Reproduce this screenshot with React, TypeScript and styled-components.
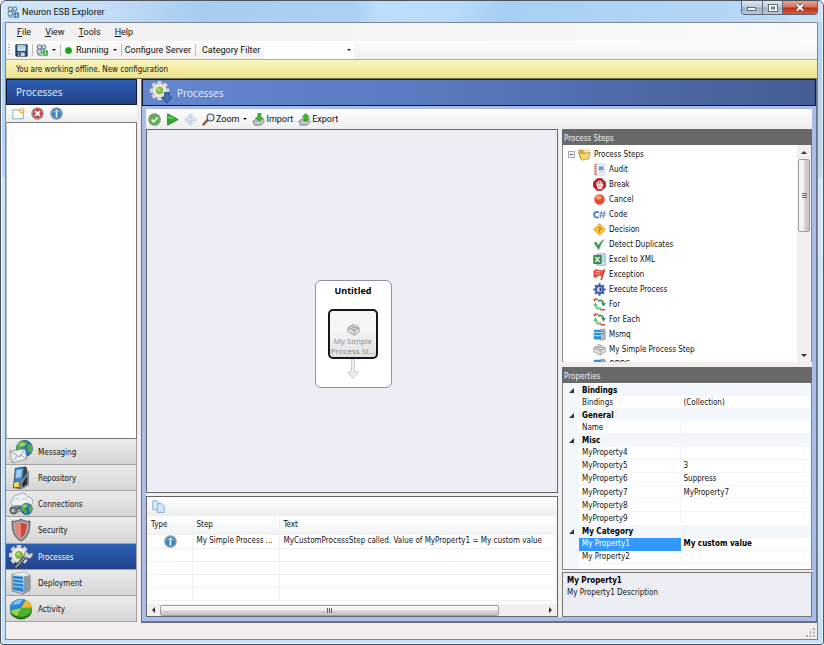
import React from "react";
import styled, { createGlobalStyle, css } from "styled-components";

const UI = `"DejaVu Sans Condensed", "DejaVu Sans", Verdana, sans-serif`;
const MENU = `Roboto, "Open Sans", sans-serif`;
const HEADING = `"Open Sans", "Noto Sans", sans-serif`;

const Global = createGlobalStyle`
  * { box-sizing: border-box; }
  html, body, #root { height: 100%; }
  body { margin: 0; background: #fff; font: 8px/12px ${UI}; color: #111; }
  button, select { font: inherit; color: inherit; background: none; border: 0; padding: 0; margin: 0; }
  ul { list-style: none; margin: 0; padding: 0; }
  svg { display: block; flex: none; }
`;

/* ---------- window frame ---------- */

const Window = styled.div`
  height: 100vh;
  display: flex;
  flex-direction: column;
  border: 1px solid #50565e;
  border-radius: 6px 6px 3px 3px;
  padding: 0 5px 4px 4px;
  background: linear-gradient(180deg, #c3dcf5 0, #b5d5f4 60px, #b9d9f7 175px, #cfe6fb 178px, #c6e2fb 100%);
  box-shadow: inset 0 0 0 1px #e6f3fe;
`;
const TitleBar = styled.header`
  height: 21px;
  flex: none;
  display: flex;
  align-items: flex-start;
  margin: 0 -4px 0 -3px;
  padding-left: 5px;
  border-radius: 5px 5px 0 0;
  background: linear-gradient(100deg, #d5e8f8 0%, #c4ddf6 13%, #a6cdf0 24%, #abd0f2 43%, #bcdffd 46%, #b9dcfb 55%, #a5cff3 61%, #acd3f5 72%, #b4d6f6 88%, #cbe3f8 100%);
`;
const Title = styled.h1`
  flex: 1;
  margin: 0;
  padding: 4px 0 0 3px;
  font: 9px/14px ${MENU};
`;
const TitleIcon = styled.div`padding-top: 5px;`;
const Captions = styled.div`
  display: flex;
  height: 14px;
  margin-right: 4px;
  border: 1px solid #5d6876;
  border-top: 0;
  border-radius: 0 0 4px 4px;
  overflow: hidden;
`;
const Caption = styled.button<{ $close?: boolean }>`
  width: ${p => (p.$close ? 35 : 20)}px;
  display: grid;
  place-items: center;
  background: ${p => p.$close
    ? "linear-gradient(#e2a594 0, #d3705a 48%, #bd2f17 52%, #d5593e 100%)"
    : "linear-gradient(#dbe6f0 0, #bccbdb 48%, #9db0c4 52%, #b9cbdc 100%)"};
  & + & { border-left: 1px solid #66707c; }
`;
const Client = styled.div`
  flex: 1;
  min-height: 0;
  display: flex;
  flex-direction: column;
  border: 1px solid #7e8792;
  background: #f1eeed;
`;

/* ---------- bars ---------- */

const MenuBar = styled.nav`
  height: 18px;
  flex: none;
  display: flex;
  align-items: center;
  gap: 14px;
  padding-left: 11px;
  background: linear-gradient(90deg, #f0f0f0, #fafafa);
  font: 9px/14px ${MENU};
  u { text-underline-offset: 1px; }
`;
const ToolBar = styled.div`
  height: 18px;
  flex: none;
  display: flex;
  align-items: center;
  padding-left: 2px;
  background: linear-gradient(#fdfdfd, #efefef);
  font: 9px/14px ${MENU};
`;
const Grip = styled.span`
  width: 2px;
  height: 12px;
  margin-right: 5px;
  background: repeating-linear-gradient(#b5b5b5 0 1px, transparent 1px 3px);
`;
const Divider = styled.span`
  width: 1px;
  height: 12px;
  margin: 0 3px 0 4px;
  background: #bdbdbd;
`;
const ToolButton = styled.button`
  display: flex;
  align-items: center;
  gap: 3px;
  white-space: nowrap;
`;
const Caret = styled.span`
  border: 2px solid transparent;
  border-top-color: #111;
  border-bottom: 0;
  margin-left: 1px;
`;
const ComboBox = styled.div`
  width: 90px;
  height: 18px;
  margin-left: 4px;
  display: grid;
  align-items: center;
  background: #fff;
  select { grid-area: 1 / 1; width: 100%; height: 100%; appearance: none; }
  ${Caret} { grid-area: 1 / 1; justify-self: end; margin-right: 3px; pointer-events: none; }
`;
const FilterLabel = styled.label`
  padding-left: 3px;
  white-space: nowrap;
`;
const Notice = styled.div`
  height: 20px;
  flex: none;
  padding: 0 10px;
  border-top: 1px solid #b5b184;
  border-bottom: 1px solid #77744d;
  background: linear-gradient(#f9f6bf, #ede38d);
  font: 8px/19px ${UI};
`;
const StatusBar = styled.footer`
  height: 16px;
  flex: none;
  display: flex;
  align-items: flex-end;
  justify-content: flex-end;
  padding: 2px;
  background: #f1eeed;
`;

/* ---------- body ---------- */

const Body = styled.div`
  flex: 1;
  min-height: 0;
  display: grid;
  grid-template-columns: 131px minmax(0, 1fr);
  grid-template-rows: minmax(0, 1fr);
  gap: 4px;
`;
const Heading = styled.h2<{ $wide?: boolean }>`
  height: ${p => (p.$wide ? 27 : 26)}px;
  flex: none;
  display: flex;
  align-items: center;
  gap: 4px;
  margin: 0;
  padding-left: ${p => (p.$wide ? 7 : 9)}px;
  border: 1px solid #10182e;
  background: ${p => p.$wide
    ? "linear-gradient(90deg, #6486d0, #5a7cc0 40%, #445d95)"
    : "linear-gradient(#2c60b5, #24428a)"};
  color: #eef3ff;
  font: 10px/14px ${HEADING};
`;
const Sidebar = styled.aside`
  display: flex;
  flex-direction: column;
  min-height: 0;
  padding-bottom: 1px;
`;
const SideTools = styled.div`
  height: 17px;
  flex: none;
  display: flex;
  align-items: center;
  gap: 6px;
  padding-left: 6px;
  background: linear-gradient(#fff, #eee);
`;
const SideList = styled.div`
  flex: 1;
  border: 1px solid #777;
  border-left-color: #bbb;
  background: #fff;
`;
const SideNav = styled.nav`
  height: 183px;
  flex: none;
  display: grid;
  grid-template-rows: repeat(7, minmax(0, 1fr));
`;
const NavButton = styled.button<{ $active?: boolean }>`
  display: flex;
  align-items: center;
  gap: 5px;
  padding: 1px 0 0 3px;
  border-bottom: 1px solid #a2a2a2;
  border-right: 1px solid #a2a2a2;
  background: linear-gradient(#ebebeb, #d5d5d5);
  text-align: left;
  ${p => p.$active && css`
    background: linear-gradient(#2c60b5, #24428a);
    color: #fff;
  `}
`;
const NavLabel = styled.span`padding-top: 2px;`;
const Main = styled.main`
  display: flex;
  flex-direction: column;
  min-width: 0;
  min-height: 0;
  border: solid #6d7178;
  border-width: 0 1px 2px;
`;
const Work = styled.div`
  flex: 1;
  min-height: 0;
  display: flex;
  flex-direction: column;
  padding: 3px 4px 4px;
  background: #a9bde8;
`;
const WorkTools = styled(ToolBar)`
  height: 20px;
  gap: 5px;
  ${ToolButton} { gap: 1px; }
  ${Caret} { margin-left: 3px; }
`;
const Panes = styled.div`
  flex: 1;
  min-height: 0;
  display: grid;
  grid-template-columns: minmax(0, 1fr) 250px;
  grid-template-rows: minmax(0, 1fr);
  gap: 4px;
  background: #f1eeed;
`;
const Column = styled.div`
  display: flex;
  flex-direction: column;
  min-height: 0;
  min-width: 0;
`;

/* ---------- designer ---------- */

const Canvas = styled.section`
  flex: 1;
  min-height: 0;
  display: grid;
  place-items: center;
  padding: 46px 0 0 2px;
  border: 1px solid #666;
  background: #edeef5;
`;
const ProcessCard = styled.div`
  width: 77px;
  height: 108px;
  display: flex;
  flex-direction: column;
  align-items: center;
  border: 1px solid #8e90ad;
  border-radius: 6px;
  background: #fff;
  h3 { margin: 3px 0 12px; font: bold 9px/13px ${HEADING}; color: #000; }
`;
const Step = styled.button`
  width: 50px;
  height: 50px;
  display: flex;
  flex-direction: column;
  align-items: center;
  justify-content: flex-end;
  padding-bottom: 1px;
  border: 2px solid #15171a;
  border-radius: 5px;
  background: linear-gradient(#f5f5f5 0 40%, #e0e0e0);
  color: #888;
  font: 8px/10px ${HEADING};
  white-space: nowrap;
`;

/* ---------- trace list ---------- */

const Trace = styled.section`
  height: 121px;
  flex: none;
  display: flex;
  flex-direction: column;
  margin-top: 3px;
  border: 1px solid #666;
  background: #fff;
`;
const TraceTools = styled.div`
  height: 19px;
  flex: none;
  display: flex;
  align-items: center;
  padding-left: 5px;
  background: linear-gradient(#fff, #eee);
`;
const TraceTable = styled.table`
  width: 100%;
  border-collapse: collapse;
  table-layout: fixed;
  th, td {
    height: 13px;
    padding: 0 4px;
    border-right: 1px solid #f0f0f0;
    border-bottom: 1px solid #f0f0f0;
    font-weight: normal;
    text-align: left;
    white-space: nowrap;
    overflow: hidden;
    text-overflow: ellipsis;
  }
  th { height: 18px; background: linear-gradient(#fff, #f2f3f5); }
  td svg { margin-left: 13px; }
`;
const TraceBody = styled.div`
  flex: 1;
  min-height: 0;
  overflow: hidden;
`;

/* ---------- scroll bars ---------- */

const HScroll = styled.div`
  height: 12px;
  flex: none;
  display: grid;
  grid-template-columns: 13px 339fr 45fr 13px;
  align-items: center;
  justify-items: center;
  background: #f0f0f0;
`;
const VScroll = styled.div`
  width: 14px;
  flex: none;
  display: grid;
  grid-template-rows: 14px 73fr 116fr 14px;
  align-items: center;
  justify-items: center;
  background: #f0f0f0;
`;
const Thumb = styled.div<{ $vertical?: boolean }>`
  width: ${p => (p.$vertical ? "12px" : "100%")};
  height: ${p => (p.$vertical ? "100%" : "11px")};
  display: grid;
  place-items: center;
  border: 1px solid #a0a0a0;
  border-radius: 2px;
  background: linear-gradient(${p => (p.$vertical ? "90deg" : "180deg")}, #f4f4f4 0 40%, #d2d2d2 60%, #c4c4c4);
  &::after {
    content: "";
    width: ${p => (p.$vertical ? 5 : 6)}px;
    height: ${p => (p.$vertical ? 6 : 5)}px;
    background: repeating-linear-gradient(${p => (p.$vertical ? "180deg" : "90deg")}, #666 0 1px, transparent 1px 2px);
  }
`;
const Arrow = styled.span<{ $to: "up" | "down" | "left" | "right" }>`
  border: 3px solid transparent;
  ${p => p.$to === "up" && css`border-bottom-color: #333; border-top: 0;`}
  ${p => p.$to === "down" && css`border-top-color: #333; border-bottom: 0;`}
  ${p => p.$to === "left" && css`border-right-color: #333; border-left: 0;`}
  ${p => p.$to === "right" && css`border-left-color: #333; border-right: 0;`}
`;

/* ---------- right hand panels ---------- */

const PanelTitle = styled.h3<{ $spaced?: boolean }>`
  height: 16px;
  flex: none;
  margin: ${p => (p.$spaced ? "5px" : "0")} 0 0;
  padding-left: 2px;
  background: #696969;
  color: #f2f2f2;
  font: 8px/19px ${UI};
`;
const TreePanel = styled.section`
  flex: 1;
  min-height: 0;
  display: flex;
  overflow: hidden;
  border: solid #888;
  border-width: 0 1px;
  background: #fff;
`;
const Tree = styled.ul`
  flex: 1;
  height: 100%;
  padding: 2px 0 0 5px;
  overflow: hidden;
`;
const TreeRow = styled.li<{ $root?: boolean }>`
  height: 15px;
  display: flex;
  align-items: center;
  gap: 3px;
  padding-left: ${p => (p.$root ? 0 : 25)}px;
  white-space: nowrap;
`;
const Expander = styled.button`
  width: 7px;
  height: 7px;
  display: grid;
  place-items: center;
  border: 1px solid #a5abb5;
  background: #f6f6f6;
  &::after { content: ""; width: 3px; height: 1px; background: #4a5a94; }
`;
const Grid = styled.section`
  height: 187px;
  flex: none;
  padding-top: 1px;
  border: 1px solid #888;
  border-top: 0;
  background: linear-gradient(90deg, #f3f6fb 16px, #fff 16px);
`;
const GridTable = styled.table`
  width: 100%;
  height: 180px;
  border-collapse: collapse;
  table-layout: fixed;
  line-height: 11px;
  td, th { padding: 0 3px; text-align: left; font-weight: normal; white-space: nowrap; }
`;
const Category = styled.tr`
  background: #f3f6fb;
  && th { font: bold 8px/11px ${UI}; color: #000; }
`;
const Toggle = styled.td`
  background: #f3f6fb;
  svg { margin-left: 3px; }
`;
const Property = styled.tr<{ $selected?: boolean }>`
  && th, && td + th + td { border-bottom: 1px solid #f3f5f9; border-right: 1px solid #f3f5f9; }
  ${p => p.$selected && css`
    && th { background: #3399ff; color: #fff; border-color: #3399ff; }
    && th + td { font-weight: bold; color: #000; }
  `}
`;
const Description = styled.section`
  height: 45px;
  flex: none;
  margin-top: 2px;
  padding: 2px 4px;
  border: 1px solid #777;
  background: #edeef5;
  h4 { margin: 0; font: bold 8px/12px ${UI}; color: #000; }
  p { margin: 0; }
`;

/* ---------- icons ---------- */

type IconProps = { size?: number; box?: number; children?: React.ReactNode };
const Icon = ({ size = 13, box = 16, children }: IconProps) => (
  <svg width={size} height={size} viewBox={`0 0 ${box} ${box}`} aria-hidden="true">{children}</svg>
);

const Cubes = ({ badge }: { badge: string }) => (
  <Icon size={12}>
    <g fill="#cfdce4" stroke="#4f6b80" strokeWidth="1.200">
      <circle cx="4.500" cy="4" r="3" /><circle cx="10.500" cy="4" r="2.800" />
      <circle cx="4.500" cy="10" r="3.200" /><circle cx="9.500" cy="9" r="2.600" />
      <path d="M2 14l4 1.500 3-1.500" fill="none" />
    </g>
    <rect x="9" y="8" width="7" height="8" rx="1.500" fill={badge} stroke="#e6f0f6" strokeWidth=".6" />
    <path d="M12.500 9.500v4.500M11 12.500l1.500 1.500 1.500-1.500" stroke="#fff" fill="none" />
  </Icon>
);
const Save = () => (
  <Icon>
    <path d="M1 1h14v14H2l-1-1z" fill="#245078" stroke="#152f49" />
    <rect x="3" y="1.500" width="10" height="7" fill="#d6e6f2" />
    <path d="M3 3h10M3 5h10" stroke="#9fbcd2" />
    <rect x="4" y="10.500" width="8" height="4.500" fill="#cdd4da" />
    <rect x="5" y="11" width="2" height="3.500" fill="#1d3d5b" />
  </Icon>
);
const GreenDot = () => <Icon size={9}><circle cx="8" cy="8" r="6" fill="#18a51e" stroke="#5cc35c" /></Icon>;
const NewItem = () => (
  <Icon>
    <path d="M1 3.500h13v11H1z" fill="#fbfdff" stroke="#6aa0a8" />
    <path d="M12 0l1 2.500 2.500-1-1 2.500L16 5.500l-2.500.8.5 2.200-2.500-1.300L9 8.500l.5-2.500L7.500 4l3-.7z" fill="#f5b53c" />
    <circle cx="12" cy="4.500" r="1.800" fill="#ffe596" />
  </Icon>
);
const Delete = () => (
  <Icon>
    <circle cx="8" cy="8" r="7" fill="#d2464a" stroke="#a39c9e" strokeWidth="1.600" />
    <path d="M5 5l6 6M11 5l-6 6" stroke="#fff" strokeWidth="2.200" />
  </Icon>
);
const Info = () => (
  <Icon>
    <circle cx="8" cy="8" r="7" fill="#3c86c4" stroke="#8fa4b6" strokeWidth="1.600" />
    <path d="M3 6.500a5.500 4.500 0 0 1 10 0z" fill="#79b4e2" />
    <path d="M8 3.500v2M8 6.500v6" stroke="#fff" strokeWidth="2" fill="none" />
  </Icon>
);
const Valid = () => (
  <Icon>
    <circle cx="8" cy="8" r="7" fill="#57b447" stroke="#8a9a88" strokeWidth="1.600" />
    <path d="M4.500 8.200l2.500 2.600 4.800-5.200" stroke="#fff" strokeWidth="2.200" fill="none" />
  </Icon>
);
const Play = () => <Icon><path d="M2 1l13 7-13 7z" fill="#2fa82c" stroke="#1c8420" /><path d="M3 3.500L11 7.500H3z" fill="#6dd062" /></Icon>;
const Move = () => (
  <Icon>
    <path d="M8 .8l2.600 3H9v3.200h3.200V5.400l3 2.600-3 2.600V9H9v3.200h1.600l-2.600 3-2.600-3H7V9H3.800v1.600L.8 8l3-2.600V7H7V3.800H5.400z" fill="#e8eff8" stroke="#a1b3cd" strokeWidth=".8" />
  </Icon>
);
const Magnifier = () => (
  <Icon>
    <path d="M1.800 14.200L7 8.500" stroke="#8a5c2e" strokeWidth="3" strokeLinecap="round" />
    <circle cx="10.500" cy="5.500" r="4.300" fill="#dcecf8" stroke="#4c5560" strokeWidth="1.400" />
  </Icon>
);
const Disk = ({ up }: { up?: boolean }) => (
  <Icon>
    <path d="M1 10l4-3h9l1 4-4 4H3z" fill="#a9b7bf" stroke="#67777f" strokeWidth=".8" />
    <path d="M3 12l8 .2 3-3" stroke="#e9f0f2" fill="none" />
    {up
      ? <path d="M9.500.5L14 5h-2.500v5h-4V5H5z" fill="#3fb830" stroke="#258019" strokeWidth=".7" />
      : <path d="M9 10L4.500 5.800H7V1l4-1v5.800h2.500z" fill="#3fb830" stroke="#258019" strokeWidth=".7" />}
  </Icon>
);
const teeth = (n: number, cx: number, cy: number, r: number, w: number, h: number, fill: string) =>
  Array.from({ length: n }, (_, i) => (
    <rect key={i} x={cx - w / 2} y={cy - r - h / 2} width={w} height={h} rx={w / 6} fill={fill} transform={`rotate(${(360 / n) * i} ${cx} ${cy})`} />
  ));
const GearDown = () => (
  <Icon size={23} box={24}>
    {teeth(8, 10, 10, 8, 4.500, 4, "#dcdcd4")}
    <circle cx="10" cy="10" r="7.500" fill="#e9e9e2" stroke="#b9bab0" strokeWidth=".6" />
    <circle cx="10" cy="10" r="4" fill="#94a88c" /><circle cx="10" cy="10" r="3.200" fill="#7fc92a" /><circle cx="9" cy="9" r="1.200" fill="#c6ee8b" />
    <path d="M15 12h5v5h3l-5.500 6-5.500-6h3z" fill="#3e6fb1" stroke="#24446f" strokeWidth=".8" />
  </Icon>
);
const Globe = ({ x, y, r }: { x: number; y: number; r: number }) => (
  <g transform={`translate(${x} ${y}) scale(${r / 10})`}>
    <circle r="10" fill="#2572c4" stroke="#1b4a87" />
    <path d="M-3-9.500C1-8 5-8 3-5S-3-3-3 0s4 1 4 4-1 5-3 4-3-5-6-6-2-7 0-9zM5-5c3-1 5 2 5 5s-2 6-4 5-1-3-2-5 0-4 1-5z" fill="#54b23d" />
    <ellipse cx="-3" cy="-5" rx="4" ry="2.500" fill="#fff" opacity=".35" />
  </g>
);
const Messaging = () => (
  <Icon size={24} box={24}>
    <Globe x={15.500} y={8.500} r={8} />
    <path d="M1 11l15-2 2 10-15 4z" fill="#eceff0" stroke="#8b9498" strokeWidth=".8" />
    <path d="M1 11l9.500 6L16 9M3 23l5-7.500M18 19l-6.500-4.200" fill="none" stroke="#8b9498" strokeWidth=".8" />
  </Icon>
);
const Repository = () => (
  <Icon size={24} box={24}>
    <path d="M6 2l10-1.500 2 1.500 1 17-7 4-8-1z" fill="#3b4148" />
    <path d="M6.500 2.500L15 1.500 13 18l-8 2z" fill="#3f86c6" />
    <path d="M7.500 4l5.500-.8-1 8-5.500 1z" fill="#9fcdf0" />
    <path d="M11 17L20 4v15l-7 4-3-1z" fill="#7d868e" />
    <path d="M13 18l5-8v8l-4 3z" fill="#25292e" />
    <path d="M5 17l5-1v5l-5 .5z" fill="#f3da4a" />
  </Icon>
);
const Connections = () => (
  <Icon size={24} box={24}>
    <path d="M5 14a4 4 0 0 1-1-7.500A4.500 4.500 0 0 1 9 3a5.500 5.500 0 0 1 9.500 2A4.500 4.500 0 0 1 20 14z" fill="#eef1f4" stroke="#8d989f" strokeWidth=".8" />
    <path d="M4 9a4 3 0 0 1 6-2M12 8a4 4 0 0 1 7 1" stroke="#c2cbd2" fill="none" />
    <circle cx="4.500" cy="18.500" r="3" fill="none" stroke="#535c63" strokeWidth="1.800" />
    <circle cx="8" cy="17" r="3" fill="none" stroke="#7c868d" strokeWidth="1.500" />
    <path d="M8 17l4-2.500" stroke="#535c63" strokeWidth="2.200" />
    <Globe x={17.500} y={17} r={5.800} />
  </Icon>
);
const Security = () => (
  <Icon size={24} box={24}>
    <path d="M12 1c3 2 6 2.500 9 2 0 9-1 16-9 20C4 19 3 12 3 3c3 .5 6 0 9-2z" fill="#878c90" stroke="#4e5357" strokeWidth=".8" />
    <path d="M12 3.500c2 1.400 4.500 1.800 6.500 1.600C18.500 12 17.500 17.500 12 20.700 6.500 17.500 5.500 12 5.500 5.100 7.500 5.300 10 4.900 12 3.500z" fill="#c64a42" stroke="#dfe2e3" strokeWidth=".8" />
    <path d="M12 3.500v17.200C6.500 17.500 5.500 12 5.500 5.100 7.500 5.300 10 4.900 12 3.500z" fill="#e2857b" />
  </Icon>
);
const Processes = () => (
  <Icon size={24} box={24}>
    {teeth(8, 10, 10, 8, 4.500, 4, "#dcdcd4")}
    <circle cx="10" cy="10" r="7.500" fill="#ecece5" stroke="#b9bab0" strokeWidth=".6" />
    <circle cx="10" cy="10" r="3.600" fill="#7fc92a" stroke="#8a9a80" /><circle cx="9" cy="9" r="1.200" fill="#c6ee8b" />
    <path d="M7 22L17 11" stroke="#383d42" strokeWidth="3.600" strokeLinecap="round" />
    <path d="M7 22L17 11" stroke="#a5adb3" strokeWidth="1.400" strokeLinecap="round" />
    <path d="M16 12.500a4 4 0 0 1 2.500-6.500l.5 3 3-.5 1-1.500a4 4 0 0 1-5 6z" fill="#d0d5d8" stroke="#555c62" strokeWidth=".7" />
  </Icon>
);
const Deployment = () => (
  <Icon size={24} box={24}>
    <path d="M3 3l12-2 6 3v15l-7 4-11-3z" fill="#c9d0d5" stroke="#6a747b" strokeWidth=".8" />
    <path d="M15 5l6-1v15l-7 4z" fill="#8e989f" />
    <path d="M4 5l10 .5V21L4 19z" fill="#2e84c8" />
    <path d="M4 8l10 1M4 11.500l10 1.200M4 15l10 1.500" stroke="#a9dbf8" strokeWidth="1.200" />
    <path d="M3 3l12-2 6 3-6 1.500z" fill="#e6eaec" />
  </Icon>
);
const Activity = () => (
  <Icon size={24} box={24}>
    <ellipse cx="12" cy="13.500" rx="11" ry="9" fill="#2b6e1c" />
    <ellipse cx="12" cy="11" rx="11" ry="9" fill="#4eae2e" />
    <path d="M12 11L1.500 14A11 9 0 0 1 17 3z" fill="#2e88d0" />
    <path d="M3 8a11 9 0 0 1 11-5.800L11 7z" fill="#7bc2ee" />
    <path d="M12 11l5-8a11 9 0 0 1 6 7.500z" fill="#f0b72c" />
    <path d="M12 11L1.500 14a11 9 0 0 0 6 5z" fill="#a0d348" />
  </Icon>
);
const Folder = () => (
  <Icon>
    <path d="M.8 5l1-2.500h4L7 4h6v9H3z" fill="#e3b03a" stroke="#a97b1e" strokeWidth=".8" />
    <path d="M7 3.500l4-1.500 2.500 1v3h-6z" fill="#fff3c4" stroke="#c09a3c" strokeWidth=".6" />
    <path d="M5 7l10-1.500-1.500 8L5 15 1 6z" fill="#f7d96f" stroke="#b4882b" strokeWidth=".8" />
  </Icon>
);
const Audit = () => (
  <Icon>
    <path d="M4 1h11v14H4z" fill="#f3f6fa" stroke="#c3ccd6" strokeWidth=".8" />
    <path d="M1.500 1h3v14h-3z" fill="#c77f5c" />
    <path d="M1 3h4M1 6h4M1 9h4M1 12h4" stroke="#efe0d5" />
    <path d="M7 4h6v5H7z" fill="#6f9fdd" /><path d="M7 11h6" stroke="#a8b8ce" />
  </Icon>
);
const Break = () => (
  <Icon>
    <path d="M5 .8h6L15.200 5v6L11 15.200H5L.8 11V5z" fill="#c41e28" stroke="#8f1118" />
    <path d="M5 8V4.500M7 7.500V3M9 7.500V3M11 8V4.500M5 8l1.500 5h4L12 8z" stroke="#fbdcdc" strokeWidth="1.400" fill="#f6bcbc" />
  </Icon>
);
const Cancel = () => <Icon><circle cx="8" cy="8" r="6.500" fill="#ea4a34" stroke="#f7a497" /><ellipse cx="7" cy="5.500" rx="3.500" ry="2.500" fill="#ff9b80" /></Icon>;
const Code = () => (
  <Icon>
    <path d="M7 5.500A3.300 3.600 0 1 0 7 11" fill="none" stroke="#4179cb" strokeWidth="2.200" />
    <path d="M10.500 3.500L9 12.500M14 3.500l-1.500 9M8 6.500h8M7.500 9.500h8" stroke="#5b8fda" strokeWidth="1.300" />
  </Icon>
);
const Decision = () => (
  <Icon>
    <path d="M8 .8L15.200 8 8 15.200.8 8z" fill="#f8c53a" stroke="#d89a22" />
    <path d="M6.500 6.500q1.500-2 3 0Q9.500 8 8 8.500v1M8 10.500v1" fill="none" stroke="#6d5312" strokeWidth="1.200" />
  </Icon>
);
const Check = () => <Icon><path d="M1.500 6L4 5l2.500 4.500Q9 4 13.500 2q-4.500 5-6.500 12.500z" fill="#36a04a" stroke="#23853a" strokeWidth=".6" /></Icon>;
const Excel = () => (
  <Icon>
    <path d="M5 1h10v14H5z" fill="#dbe9f6" stroke="#7f9cba" />
    <path d="M10 4h4M10 7h4M10 10h4" stroke="#8db0d3" />
    <path d="M1 3h9v10H1z" fill="#3a9a4b" stroke="#26743a" />
    <path d="M3 5l5 6M8 5l-5 6" stroke="#fff" strokeWidth="1.600" />
  </Icon>
);
const Exception = () => (
  <Icon>
    <path d="M14 2L10 15" stroke="#a8632f" strokeWidth="2" />
    <path d="M1 3.500q3-2.500 6-1T14.500 2L11.500 10Q8 8 5.500 10.500T1 11z" fill="#e8513f" stroke="#c9372a" strokeWidth=".6" />
    <path d="M3 5q3-2 6 0M3 8q2-1.500 5-1" stroke="#ffc5b8" fill="none" />
  </Icon>
);
const BlueGear = () => (
  <Icon>
    {teeth(8, 8, 8, 6, 2.600, 3.200, "#3d5bb0")}
    <circle cx="8" cy="8" r="4.400" fill="#e4ebfa" stroke="#3d5bb0" strokeWidth="2.600" />
    <path d="M8 5.500a2.500 2.500 0 0 1 0 5z" fill="#24367c" />
  </Icon>
);
const Loop = () => (
  <Icon>
    <path d="M1 1.500h5M9 14.500h6M1 3.500h2" stroke="#e04848" strokeWidth="1.800" />
    <path d="M6 3.500q6-2 7 4" fill="none" stroke="#2f9450" strokeWidth="2.200" />
    <path d="M3 8.500q1 6 7 4" fill="none" stroke="#56c46e" strokeWidth="2.200" />
    <path d="M10 6.500h6l-3 4z" fill="#2f9450" /><path d="M0 9.500h6l-3-4z" fill="#56c46e" />
  </Icon>
);
const Queue = () => (
  <Icon>
    <path d="M9 2l4-1 2 1v12l-4 1H9z" fill="#b4bcc2" stroke="#7d878e" strokeWidth=".7" />
    <path d="M11 4h3M11 6.500h3" stroke="#6b747b" />
    <rect x="1" y="2" width="9" height="12" rx="1.500" fill="#2e8fdc" />
    <path d="M1 5.500h9M1 9.500h9" stroke="#c9e8fd" strokeWidth="1.200" />
  </Icon>
);
const Brick = () => (
  <Icon>
    <g stroke="#8d8d8d" strokeWidth=".8">
      <path d="M1 6l6-3.500L15 6v5l-6 4-8-4z" fill="#dcdcdc" />
      <path d="M1 6l8 3.500L15 6M9 9.500V15" fill="none" />
      <ellipse cx="5" cy="5.200" rx="1.800" ry="1.300" fill="#f4f4f4" /><ellipse cx="9.200" cy="6.800" rx="1.800" ry="1.300" fill="#f4f4f4" />
      <ellipse cx="7.500" cy="3" rx="1.800" ry="1.300" fill="#f4f4f4" /><ellipse cx="11.500" cy="4.600" rx="1.800" ry="1.300" fill="#f4f4f4" />
    </g>
  </Icon>
);
const CopyPages = () => (
  <Icon>
    <path d="M1 1h5l3 3v8H1z" fill="#e1eefb" stroke="#6fa0d8" />
    <path d="M6.500 4.500h5l3.500 3v8H6.500z" fill="#d2e6fa" stroke="#6fa0d8" />
  </Icon>
);
const Down = () => (
  <svg width="12" height="20" viewBox="0 0 12 20" aria-hidden="true">
    <path d="M4.500 0h3v13h4L6 19.500.5 13h4z" fill="#ededed" stroke="#cfcfcf" />
  </svg>
);
const OpenMark = () => <svg width="5" height="5" viewBox="0 0 5 5" aria-hidden="true"><path d="M5 0v5H0z" fill="#333" /></svg>;
const Minimize = () => <svg width="10" height="8" viewBox="0 0 10 8" aria-hidden="true"><rect x=".5" y="3.500" width="8" height="3" fill="#fff" stroke="#626d7a" /></svg>;
const Maximize = () => (
  <svg width="10" height="8" viewBox="0 0 10 8" aria-hidden="true">
    <rect x=".5" y=".5" width="9" height="7" fill="#fff" stroke="#626d7a" /><rect x="3.500" y="3" width="3" height="2" fill="#b4c2d1" stroke="#626d7a" />
  </svg>
);
const Close = () => (
  <svg width="10" height="9" viewBox="0 0 10 9" aria-hidden="true">
    <path d="M2 1.500l6 6M8 1.500l-6 6" stroke="#6c3a3a" strokeWidth="3.600" /><path d="M2 1.500l6 6M8 1.500l-6 6" stroke="#fff" strokeWidth="2" />
  </svg>
);
const SizeGrip = () => (
  <svg width="9" height="9" viewBox="0 0 9 9" fill="#b3b0ae" aria-hidden="true">
    <path d="M7 0h2v2H7zM7 3.500h2v2H7zM7 7h2v2H7zM3.500 3.500h2v2h-2zM3.500 7h2v2h-2zM0 7h2v2H0z" />
  </svg>
);

/* ---------- data ---------- */

const navItems = [
  { label: "Messaging", icon: <Messaging /> },
  { label: "Repository", icon: <Repository /> },
  { label: "Connections", icon: <Connections /> },
  { label: "Security", icon: <Security /> },
  { label: "Processes", icon: <Processes />, active: true },
  { label: "Deployment", icon: <Deployment /> },
  { label: "Activity", icon: <Activity /> },
];
const steps: [string, React.ReactNode][] = [
  ["Audit", <Audit />], ["Break", <Break />], ["Cancel", <Cancel />], ["Code", <Code />],
  ["Decision", <Decision />], ["Detect Duplicates", <Check />], ["Excel to XML", <Excel />],
  ["Exception", <Exception />], ["Execute Process", <BlueGear />], ["For", <Loop />],
  ["For Each", <Loop />], ["Msmq", <Queue />], ["My Simple Process Step", <Brick />], ["ODBC", <Queue />],
];
const categories: { name: string; rows: [string, string][] }[] = [
  { name: "Bindings", rows: [["Bindings", "(Collection)"]] },
  { name: "General", rows: [["Name", ""]] },
  { name: "Misc", rows: [["MyProperty4", ""], ["MyProperty5", "3"], ["MyProperty6", "Suppress"], ["MyProperty7", "MyProperty7"], ["MyProperty8", ""], ["MyProperty9", ""]] },
  { name: "My Category", rows: [["My Property1", "My custom value"], ["My Property2", ""]] },
];
const menus = ["File", "View", "Tools", "Help"];

export default function App() {
  return (
    <>
      <Global />
      <Window>
        <TitleBar>
          <TitleIcon><Cubes badge="#2f6fb5" /></TitleIcon>
          <Title>Neuron ESB Explorer</Title>
          <Captions>
            <Caption aria-label="Minimize"><Minimize /></Caption>
            <Caption aria-label="Maximize"><Maximize /></Caption>
            <Caption $close aria-label="Close"><Close /></Caption>
          </Captions>
        </TitleBar>
        <Client>
          <MenuBar>
            {menus.map(m => <button key={m}><u>{m[0]}</u>{m.slice(1)}</button>)}
          </MenuBar>
          <ToolBar>
            <Grip />
            <ToolButton aria-label="Save"><Save /></ToolButton>
            <Divider />
            <ToolButton aria-label="Services"><Cubes badge="#35a03a" /><Caret /></ToolButton>
            <Divider />
            <ToolButton><GreenDot />Running <Caret /></ToolButton>
            <Divider />
            <ToolButton>Configure Server</ToolButton>
            <Divider />
            <FilterLabel htmlFor="category">Category Filter</FilterLabel>
            <ComboBox>
              <select id="category"><option></option></select>
              <Caret />
            </ComboBox>
          </ToolBar>
          <Notice>You are working offline. New configuration</Notice>
          <Body>
            <Sidebar>
              <Heading>Processes</Heading>
              <SideTools>
                <ToolButton aria-label="New"><NewItem /></ToolButton>
                <ToolButton aria-label="Delete"><Delete /></ToolButton>
                <ToolButton aria-label="Information"><Info /></ToolButton>
              </SideTools>
              <SideList />
              <SideNav>
                {navItems.map(n => (
                  <NavButton key={n.label} $active={n.active}>{n.icon}<NavLabel>{n.label}</NavLabel></NavButton>
                ))}
              </SideNav>
            </Sidebar>
            <Main>
              <Heading $wide><GearDown />Processes</Heading>
              <Work>
                <WorkTools>
                  <ToolButton aria-label="Validate"><Valid /></ToolButton>
                  <ToolButton aria-label="Run"><Play /></ToolButton>
                  <ToolButton aria-label="Pan"><Move /></ToolButton>
                  <ToolButton><Magnifier />Zoom <Caret /></ToolButton>
                  <ToolButton><Disk />Import</ToolButton>
                  <ToolButton><Disk up />Export</ToolButton>
                </WorkTools>
                <Panes>
                  <Column>
                    <Canvas>
                      <ProcessCard>
                        <h3>Untitled</h3>
                        <Step><Brick />My Simple<br />Process St...</Step>
                        <Down />
                      </ProcessCard>
                    </Canvas>
                    <Trace>
                      <TraceTools><ToolButton aria-label="Copy"><CopyPages /></ToolButton></TraceTools>
                      <TraceBody>
                        <TraceTable>
                          <colgroup><col width="45" /><col width="87" /><col /></colgroup>
                          <thead><tr><th>Type</th><th>Step</th><th>Text</th></tr></thead>
                          <tbody>
                            <tr>
                              <td><Info /></td>
                              <td>My Simple Process ...</td>
                              <td>MyCustomProcessStep called. Value of MyProperty1 = My custom value</td>
                            </tr>
                            {[1, 2, 3, 4].map(i => <tr key={i}><td /><td /><td /></tr>)}
                          </tbody>
                        </TraceTable>
                      </TraceBody>
                      <HScroll><Arrow $to="left" /><Thumb /><span /><Arrow $to="right" /></HScroll>
                    </Trace>
                  </Column>
                  <Column>
                    <PanelTitle>Process Steps</PanelTitle>
                    <TreePanel>
                      <Tree>
                        <TreeRow $root><Expander aria-label="Collapse" /><Folder />Process Steps</TreeRow>
                        {steps.map(([label, icon]) => <TreeRow key={label}>{icon}{label}</TreeRow>)}
                      </Tree>
                      <VScroll><Arrow $to="up" /><Thumb $vertical /><span /><Arrow $to="down" /></VScroll>
                    </TreePanel>
                    <PanelTitle $spaced>Properties</PanelTitle>
                    <Grid>
                      <GridTable>
                        <colgroup><col width="16" /><col width="101" /><col /></colgroup>
                        <tbody>
                          {categories.map(c => (
                            <React.Fragment key={c.name}>
                              <Category><Toggle><OpenMark /></Toggle><th colSpan={2}>{c.name}</th></Category>
                              {c.rows.map(([name, value]) => (
                                <Property key={name} $selected={name === "My Property1"}>
                                  <Toggle /><th>{name}</th><td>{value}</td>
                                </Property>
                              ))}
                            </React.Fragment>
                          ))}
                        </tbody>
                      </GridTable>
                    </Grid>
                    <Description>
                      <h4>My Property1</h4>
                      <p>My Property1 Description</p>
                    </Description>
                  </Column>
                </Panes>
              </Work>
            </Main>
          </Body>
          <StatusBar><SizeGrip /></StatusBar>
        </Client>
      </Window>
    </>
  );
}
